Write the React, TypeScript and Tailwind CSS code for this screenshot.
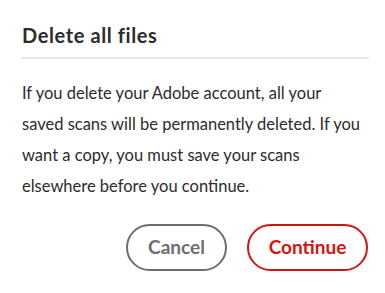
import React from 'react';

const App: React.FC = () => {
  return (
    <div className="w-[385px] h-[293px] bg-white font-['Lato',sans-serif] overflow-hidden">
      <div className="pl-[21px] pr-[16px] pt-[21px]">
        <h1 className="text-[20px] leading-[28px] font-bold tracking-[0.6px] text-[#2c2c2c] pl-[1px]">Delete all files</h1>
        <div className="mt-[8px] h-[2px] bg-[#e8e8e8]" />
        <p className="mt-[19px] pl-[1px] text-[16.5px] leading-[31px] text-[#2c2c2c] whitespace-nowrap">
          If you delete your Adobe account, all your
          <br />
          saved scans will be permanently deleted. If you
          <br />
          want a copy, you must save your scans
          <br />
          elsewhere before you continue.
        </p>
        <div className="mt-[22px] flex justify-end gap-[20px] pr-[1px]">
          <button className="h-[47px] w-[101px] rounded-full border-2 border-[#6e6e6e] text-[#6e6e6e] text-[19px] font-bold">
            Cancel
          </button>
          <button className="h-[47px] w-[121px] rounded-full border-2 border-[#d31510] text-[#d31510] text-[19px] font-bold">
            Continue
          </button>
        </div>
      </div>
    </div>
  );
};

export default App;
